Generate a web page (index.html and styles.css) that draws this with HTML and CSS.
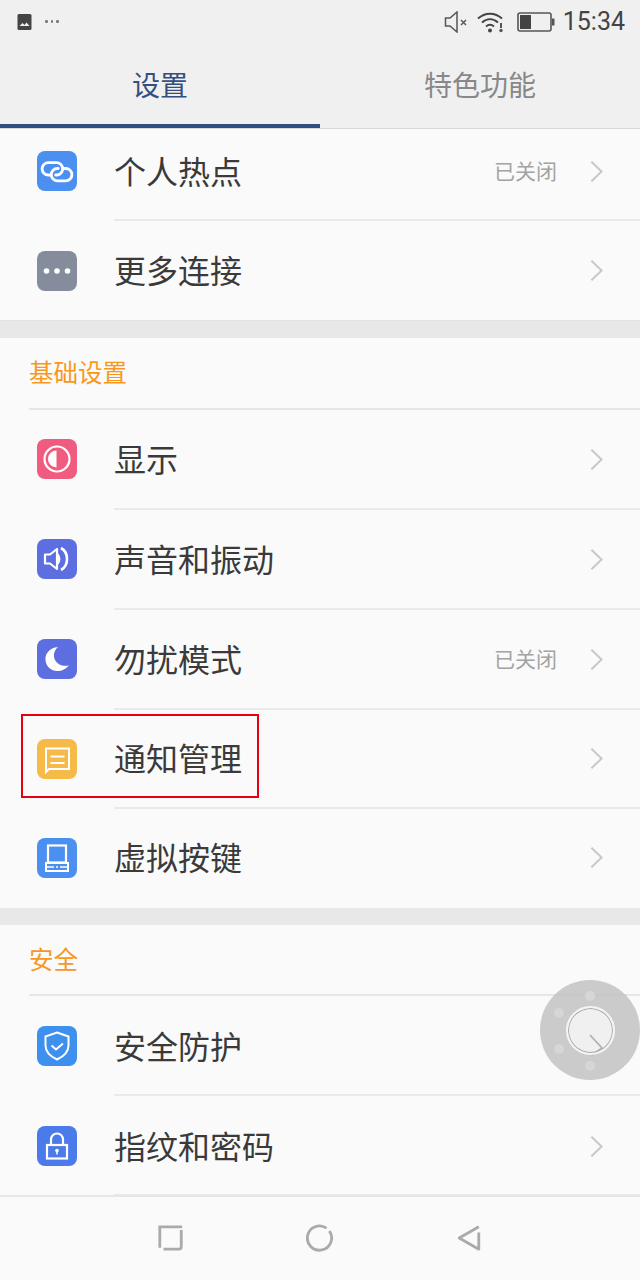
FILE: index.html
```html
<!DOCTYPE html>
<html lang="zh-CN">
<head>
<meta charset="utf-8">
<title>设置</title>
<link rel="stylesheet" href="styles.css">
</head>
<body>
<div class="screen">
  <header class="top">
    <div class="status">
      <div class="status-left">
        <svg class="pic" viewBox="0 0 14 16"><rect x="0" y="0" width="14" height="16" rx="1.500" fill="#444"/><path d="M2 12l3-3 2 2 2-2.500 3 3.500z" fill="#eee"/></svg>
        <span class="dots"><i></i><i></i><i></i></span>
      </div>
      <div class="status-right">
        <svg class="mute" viewBox="0 0 26 22"><path d="M1.500 7h4.500l7-6v20l-7-6h-4.500z" fill="none" stroke="#555" stroke-width="1.500"/><path d="M17 9l5 5m0-5l-5 5" stroke="#555" stroke-width="1.400"/></svg>
        <svg class="wifi" viewBox="0 0 28 22"><g fill="none" stroke="#444" stroke-width="2"><path d="M1 7.500c7-6.500 17-6.500 24 0"/><path d="M5 11.500c5-4.500 11-4.500 16 0"/><path d="M9 15.500c3-2.500 5-2.500 8 0"/></g><circle cx="13" cy="19.500" r="2" fill="#444"/><circle cx="24" cy="19.500" r="1.700" fill="#555"/><rect x="23" y="12" width="2" height="5" fill="#555"/></svg>
        <svg class="batt" viewBox="0 0 38 20"><rect x="1" y="1" width="33" height="18" rx="2" fill="none" stroke="#555" stroke-width="1.600"/><rect x="3" y="3" width="11" height="14" fill="#444"/><rect x="35" y="6.500" width="2.500" height="7" fill="#555"/></svg>
        <span class="time">15:34</span>
      </div>
    </div>
    <nav class="tabs">
      <div class="tab tab-on">设置</div>
      <div class="tab">特色功能</div>
    </nav>
  </header>

  <main class="list">
    <section class="group group-first">
      <div class="row row-clipped">
        <span class="ico c-blue"><svg viewBox="0 0 40 40"><g fill="none" stroke="#fff" stroke-width="2.800" stroke-linecap="round"><path d="M13.500 24h-2.200a6.200 6.200 0 0 1 0-12.400h8.200a6.200 6.200 0 0 1 0 12.400h-.8"/><path d="M26.500 17.500h2.200a6.200 6.200 0 0 1 0 12.400h-8.200a6.200 6.200 0 0 1 0-12.400h.8"/></g></svg></span>
        <span class="label">个人热点</span><span class="val">已关闭</span><svg class="chev" viewBox="0 0 14 24"><path d="M1.500 1.500L12.500 12L1.500 22.500"/></svg>
      </div>
      <div class="row row-99 row-flat row-last">
        <span class="ico c-grey"><svg viewBox="0 0 40 40"><g fill="#fff"><circle cx="9.500" cy="20" r="2.800"/><circle cx="20" cy="20" r="2.800"/><circle cx="30.500" cy="20" r="2.800"/></g></svg></span>
        <span class="label">更多连接</span><svg class="chev" viewBox="0 0 14 24"><path d="M1.500 1.500L12.500 12L1.500 22.500"/></svg>
      </div>
    </section>

    <section class="group">
      <h2 class="sec">基础设置</h2>
      <div class="row">
        <span class="ico c-pink"><svg viewBox="0 0 40 40"><circle cx="20" cy="20" r="12.500" fill="none" stroke="#fff" stroke-width="2.200"/><path d="M19.500 11.500a8.500 8.500 0 0 0 0 17z" fill="#fff"/></svg></span>
        <span class="label">显示</span><svg class="chev" viewBox="0 0 14 24"><path d="M1.500 1.500L12.500 12L1.500 22.500"/></svg>
      </div>
      <div class="row">
        <span class="ico c-indigo"><svg viewBox="0 0 40 40"><path d="M8 15.500h5l7-5.500v20l-7-5.500h-5z" fill="none" stroke="#fff" stroke-width="2.200" stroke-linejoin="round"/><path d="M20 13.500c4.500 3 4.500 10 0 13z" fill="#fff"/><path d="M24 9c8 4.500 8 17.500 0 22" fill="none" stroke="#fff" stroke-width="2.600"/></svg></span>
        <span class="label">声音和振动</span><svg class="chev" viewBox="0 0 14 24"><path d="M1.500 1.500L12.500 12L1.500 22.500"/></svg>
      </div>
      <div class="row">
        <span class="ico c-indigo"><svg viewBox="0 0 40 40"><path d="M21 8C12 9 8 15 8.500 21C9 28 15 32.500 21 32C25 32 29 30 32 26.500C24 28 18 24 17 18C16.500 14 18 10.500 21 8z" fill="#fff"/></svg></span>
        <span class="label">勿扰模式</span><span class="val">已关闭</span><svg class="chev" viewBox="0 0 14 24"><path d="M1.500 1.500L12.500 12L1.500 22.500"/></svg>
      </div>
      <div class="row row-99">
        <span class="ico c-amber"><svg viewBox="0 0 40 40"><path d="M9 9.500h23v20.500h-20l-3 3z" fill="none" stroke="#fff" stroke-width="2"/><path d="M13.500 17.500h14M13.500 24h14" stroke="#fff" stroke-width="2"/></svg></span>
        <span class="label">通知管理</span><svg class="chev" viewBox="0 0 14 24"><path d="M1.500 1.500L12.500 12L1.500 22.500"/></svg>
      </div>
      <div class="row row-99 row-last">
        <span class="ico c-blue"><svg viewBox="0 0 40 40"><rect x="11" y="7.500" width="18" height="17" fill="none" stroke="#fff" stroke-width="2.200"/><path d="M9 25h22v8h-22z" fill="none" stroke="#fff" stroke-width="2"/><path d="M9 29h8M23 29h8" stroke="#fff" stroke-width="1.500"/><circle cx="20" cy="29" r="1" fill="#fff"/></svg></span>
        <span class="label">虚拟按键</span><svg class="chev" viewBox="0 0 14 24"><path d="M1.500 1.500L12.500 12L1.500 22.500"/></svg>
      </div>
    </section>

    <section class="group group-third">
      <h2 class="sec sec-short">安全</h2>
      <div class="row row-flat">
        <span class="ico c-sky"><svg viewBox="0 0 40 40"><path d="M20 6.500l11.500 4v9c0 6.500-5 11-11.500 14-6.500-3-11.500-7.500-11.500-14v-9z" fill="none" stroke="#fff" stroke-width="2"/><path d="M14.500 19.500l4.500 4 7-6" fill="none" stroke="#fff" stroke-width="2"/></svg></span>
        <span class="label">安全防护</span><svg class="chev" viewBox="0 0 14 24"><path d="M1.500 1.500L12.500 12L1.500 22.500"/></svg>
      </div>
      <div class="row row-flat">
        <span class="ico c-royal"><svg viewBox="0 0 40 40"><path d="M14 19v-5.500a6 6 0 0 1 12 0v5.500" fill="none" stroke="#fff" stroke-width="2.200"/><rect x="10" y="19" width="20" height="13.500" fill="none" stroke="#fff" stroke-width="2.200"/><circle cx="20" cy="24.500" r="1.800" fill="#fff"/><rect x="19.200" y="25" width="1.600" height="3.500" fill="#fff"/></svg></span>
        <span class="label">指纹和密码</span><svg class="chev" viewBox="0 0 14 24"><path d="M1.500 1.500L12.500 12L1.500 22.500"/></svg>
      </div>
    </section>
  </main>

  <footer class="navbar">
    <svg class="nav-ico" viewBox="0 0 30 30"><path d="M27 3h-24v22.500M7 27h16.500q2.500 0 2.500-2.500v-18" fill="none" stroke="#aaa" stroke-width="3"/></svg>
    <svg class="nav-ico" viewBox="0 0 30 30"><path d="M22 4.500a13 13 0 1 0 3 3" fill="none" stroke="#aaa" stroke-width="3"/></svg>
    <svg class="nav-ico" viewBox="0 0 30 30"><path d="M25.500 9v18l-21-12 21-12" fill="none" stroke="#aaa" stroke-width="3" stroke-linejoin="round"/></svg>
  </footer>

  <div class="mark"></div>

  <div class="ball">
    <i class="pip p1"></i><i class="pip p2"></i><i class="pip p3"></i><i class="pip p4"></i>
    <div class="knob"><svg class="knob-chev" viewBox="0 0 45 45"><path d="M22 27L34 40L24 47"/></svg></div>
  </div>
</div>
</body>
</html>
```
FILE: styles.css
```css
* { box-sizing: border-box; }
html, body { margin: 0; padding: 0; }
body {
  width: 640px;
  height: 1280px;
  overflow: hidden;
  font-family: "Noto Sans CJK SC", "Noto Sans", sans-serif;
  background: #fafafa;
}
.screen {
  position: relative;
  width: 640px;
  height: 1280px;
  display: flex;
  flex-direction: column;
  overflow: hidden;
}
.top {
  height: 129px;
  flex: none;
  background: #f0f0f0;
  border-bottom: 1px solid #d9d9d9;
  display: flex;
  flex-direction: column;
}
.status {
  height: 43px;
  padding: 0 15px 0 17px;
  display: flex;
  align-items: center;
  justify-content: space-between;
  flex: none;
}
.status-left { display: flex; align-items: center; gap: 13px; }
.pic { width: 15px; height: 16px; }
.dots { display: flex; gap: 3px; }
.dots i { width: 2.500px; height: 2.500px; border-radius: 50%; background: #777; }
.status-right { display: flex; align-items: center; }
.mute { width: 26px; height: 22px; margin-right: 7px; }
.wifi { width: 28px; height: 22px; margin-right: 12px; }
.batt { width: 38px; height: 20px; margin-right: 8px; }
.time {
  font-family: Roboto, sans-serif;
  font-size: 25px;
  line-height: 30px;
  color: #444;
}
.tabs { flex: none; height: 85px; display: flex; }
.tab {
  width: 320px;
  height: 85px;
  display: flex;
  align-items: center;
  justify-content: center;
  padding-bottom: 3px;
  font-size: 28px;
  color: #888;
}
.tab-on {
  color: #34507e;
  border-bottom: 4px solid #2f4d7f;
  padding-bottom: 0;
  padding-top: 1px;
}
.list {
  flex: 1;
  display: flex;
  flex-direction: column;
  gap: 17px;
  background: #e8e8e8;
  min-height: 0;
  overflow: hidden;
}
.group { background: #fafafa; flex: none; }
.group-first { border-bottom: 1px solid #e2e2e2; }
.sec {
  margin: 0 0 0 29px;
  height: 72px;
  border-bottom: 2px solid #e6e6e6;
  font-size: 24.500px;
  font-weight: 400;
  line-height: 68px;
  color: #f7981d;
}
.sec-short { height: 71px; }
.row {
  position: relative;
  height: 100px;
  display: flex;
  align-items: center;
  padding: 0 37px 2px 37px;
}
.row::after {
  content: "";
  position: absolute;
  left: 114px;
  right: 0;
  bottom: 0;
  height: 2px;
  background: #e9e9e9;
}
.row-last::after { display: none; }
.row-clipped { height: 92px; padding-bottom: 8px; }
.row-99 { height: 99px; }
.row-flat { padding-bottom: 0; }
.ico {
  width: 40px;
  height: 40px;
  border-radius: 8px;
  flex: none;
  display: flex;
}
.ico svg { width: 40px; height: 40px; }
.c-blue { background: #4b8ff0; }
.c-grey { background: #858d9c; }
.c-pink { background: #ef5c80; }
.c-indigo { background: #5c6ee0; }
.c-amber { background: #f5ba47; }
.c-sky { background: #3d90ee; }
.c-royal { background: #4b7bea; }
.label {
  margin-left: 37px;
  margin-bottom: 3px;
  flex: 1;
  font-size: 32px;
  color: #3a3a3a;
}
.val {
  font-size: 21px;
  color: #a3a3a3;
  margin-right: 33px;
  margin-bottom: 2px;
}
.chev {
  width: 13px;
  height: 23px;
  flex: none;
}
.chev path {
  fill: none;
  stroke: #c8c8c8;
  stroke-width: 2.200;
}
.navbar {
  height: 85px;
  flex: none;
  background: #fafafa;
  border-top: 2px solid #e6e6e6;
  display: flex;
  justify-content: center;
  align-items: center;
  gap: 121px;
  padding-bottom: 2px;
}
.nav-ico { width: 28px; height: 30px; }
.mark {
  position: absolute;
  left: 21px;
  top: 714px;
  width: 238px;
  height: 84px;
  border: 2px solid #e60012;
}
.ball {
  position: absolute;
  left: 540px;
  top: 980px;
  width: 100px;
  height: 100px;
  border-radius: 50%;
  background: rgba(190, 190, 190, 0.78);
}
.pip {
  position: absolute;
  width: 10px;
  height: 10px;
  border-radius: 50%;
  background: #d6d6d6;
}
.p1 { left: 45px; top: 11px; }
.p2 { left: 14px; top: 28px; }
.p3 { left: 14px; top: 64px; }
.p4 { left: 45px; top: 81px; }
.knob {
  position: absolute;
  left: 26px;
  top: 26px;
  width: 49px;
  height: 49px;
  border-radius: 50%;
  background: #f0f0f0;
  border: 2px solid #f4f4f4;
  box-shadow: 0 0 0 1px #a8a8a8 inset;
  overflow: hidden;
}
.knob-chev { display: block; width: 45px; height: 45px; }
.knob-chev path { fill: none; stroke: #b0b0b0; stroke-width: 1.800; }
```
